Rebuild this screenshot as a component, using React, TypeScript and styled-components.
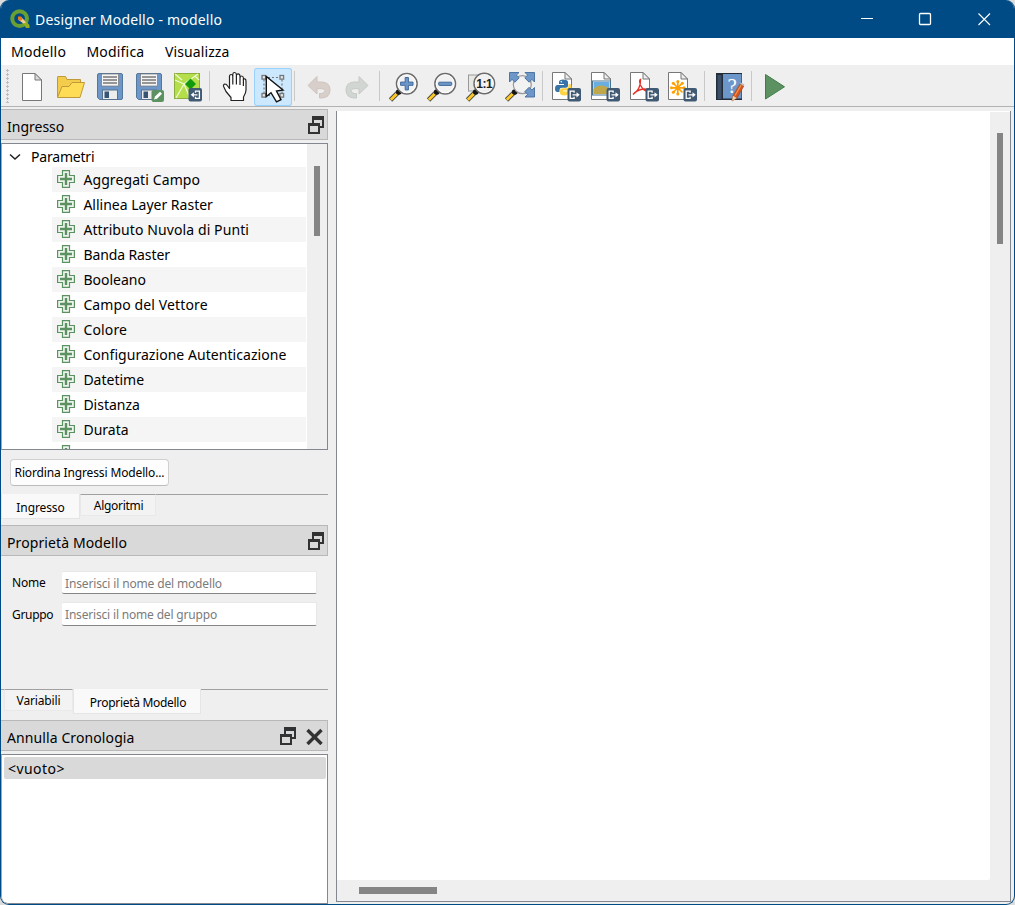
import React from 'react';
import styled, { createGlobalStyle } from 'styled-components';

const Global = createGlobalStyle`
  * { box-sizing: border-box; }
  html, body { margin: 0; padding: 0; background: #dcdcdc; overflow: hidden; }
  svg { display: block; flex: none; }
`;

const Window = styled.div`
  width: 1015px;
  height: 905px;
  display: flex;
  flex-direction: column;
  border: 1px solid #004b85;
  border-top: 0;
  border-radius: 9px;
  background: #efefef;
  overflow: hidden;
  font-family: 'Noto Sans', 'Open Sans', sans-serif;
  font-size: 14px;
  color: #000;
`;

const TitleBar = styled.header`
  height: 38px;
  flex: none;
  display: flex;
  align-items: center;
  padding-left: 9px;
  background: #004b85;
  color: #fff;
`;

const Label = styled.span<{ $size?: number; $track?: number }>`
  font-size: ${p => p.$size ?? 14}px;
  letter-spacing: ${p => p.$track ?? 0}px;
  line-height: 20px;
  white-space: pre;
`;

const TitleText = styled(Label)`
  flex: 1;
  margin-left: 5px;
  padding-top: 2px;
`;

const MenuBar = styled.nav`
  height: 27px;
  flex: none;
  display: flex;
  align-items: center;
  gap: 20px;
  padding-left: 10px;
  background: #fff;
`;

const MenuItem = styled(Label)<{ $w: number }>`
  width: ${p => p.$w}px;
`;

const ToolBar = styled.div`
  height: 42px;
  flex: none;
  display: flex;
  align-items: flex-start;
  padding-top: 3px;
  border-bottom: 1px solid #b2b2b2;
`;

const Grip = styled.div`
  width: 3px;
  height: 34px;
  margin: 1px 3px 0 5px;
  background: radial-gradient(circle at 1.5px 1.5px, #bdbdbd 1px, transparent 1.3px) 0 0 / 3px 4px;
`;

const Tool = styled.div<{ $active?: boolean }>`
  height: 38px;
  border-radius: 3px;
  background: ${p => (p.$active ? '#cce8ff' : 'transparent')};
  box-shadow: ${p => (p.$active ? 'inset 0 0 0 1px #99d1ff' : 'none')};
`;

const Separator = styled.div`
  width: 1px;
  height: 30px;
  margin: 3px 5px 0 2px;
  background: #c9c9c9;
`;

const Body = styled.div`
  flex: 1;
  min-height: 0;
  display: flex;
`;

const Side = styled.aside`
  width: 327px;
  flex: none;
  display: flex;
  flex-direction: column;
  padding-top: 2px;
`;

const DockHeader = styled.div<{ $closable?: boolean }>`
  height: 31px;
  flex: none;
  display: flex;
  align-items: center;
  padding: 5px ${p => (p.$closable ? 4 : 2)}px 0 6px;
  background: #d9d9d9;
  border: 1px solid #b8b8b8;
  border-left: 0;
`;

const DockTitle = styled(Label)`
  flex: 1;
`;

const DockButtons = styled.div`
  display: flex;
  gap: 9px;
  margin-top: -5px;
`;

const Tree = styled.div`
  height: 307px;
  flex: none;
  margin-top: 3px;
  display: flex;
  border: 1px solid #828790;
  border-left-color: #a3a8b0;
  background: #fff;
`;

const TreeRows = styled.div`
  flex: 1;
  overflow: hidden;
`;

const TreeRoot = styled.div`
  height: 23px;
  display: flex;
  align-items: center;
  gap: 10px;
  padding: 3px 0 0 7px;
`;

const TreeItem = styled.div<{ $alt: boolean }>`
  height: 25px;
  margin: 0 1px 0 50px;
  padding: 0 0 1px 5px;
  display: flex;
  align-items: center;
  gap: 8.4px;
  background: ${p => (p.$alt ? '#f5f5f5' : '#fff')};
`;

const TreeText = styled(Label)`
  padding-top: 2px;
`;

const TreeScroll = styled.div`
  width: 20px;
  padding: 22px 7px 0 7px;
  background: #efefef;
`;

const Thumb = styled.div<{ $w: number; $h: number }>`
  width: ${p => p.$w}px;
  height: ${p => p.$h}px;
  background: #858585;
`;

const PushButton = styled.button`
  width: 159px;
  height: 27px;
  flex: none;
  margin: 9px 0 8px 9px;
  padding: 0;
  border: 1px solid #d0d0d0;
  border-bottom-color: #bcbcbc;
  border-radius: 4px;
  background: #fdfdfd;
  font-family: inherit;
  color: #000;
`;

const Tabs = styled.div<{ $h: number }>`
  height: ${p => p.$h}px;
  flex: none;
  display: flex;
  align-items: flex-start;
`;

const Tab = styled.div<{ $active?: boolean; $w: number; $pad?: number }>`
  width: ${p => p.$w}px;
  height: ${p => (p.$active ? 25 : 22)}px;
  display: flex;
  align-items: center;
  justify-content: center;
  padding-top: ${p => (p.$active ? 4 : 1)}px;
  padding-left: ${p => p.$pad ?? 0}px;
  background: ${p => (p.$active ? '#f9f9f9' : '#f3f3f3')};
  border: 1px solid ${p => (p.$active ? '#e5e5e5' : '#e9e9e9')};
  border-top: ${p => (p.$active ? '0' : '1px solid #a0a0a0')};
`;

const TabLine = styled.div<{ $w?: number }>`
  height: 1px;
  flex: ${p => (p.$w ? 'none' : '1')};
  width: ${p => (p.$w ? p.$w + 'px' : 'auto')};
  background: #a0a0a0;
`;

const Form = styled.div`
  height: 133px;
  flex: none;
  display: grid;
  grid-template-columns: 50px 255px;
  grid-template-rows: 23px 24px;
  row-gap: 8px;
  padding: 15px 0 0 11px;
`;

const FieldName = styled(Label)<{ $top?: number }>`
  padding-top: ${p => p.$top ?? 2}px;
`;

const Field = styled.div`
  display: flex;
  align-items: center;
  padding: 2px 0 0 3px;
  background: #fff;
  border: 1px solid #e8e8e8;
  border-left-width: 0;
  border-bottom-color: #868686;
  border-radius: 2px;
  color: #7b7b7b;
`;

const List = styled.div`
  flex: 1;
  margin-top: 3px;
  padding: 2px 1px 0 2px;
  border: 1px solid #828790;
  border-left-color: #a3a8b0;
  border-radius: 0 0 0 7px;
  background: #fff;
`;

const ListItem = styled.div`
  height: 22px;
  display: flex;
  align-items: center;
  padding: 1px 0 0 4px;
  border-radius: 2px;
  background: #d9d9d9;
`;

const Canvas = styled.main`
  width: 675px;
  height: 791px;
  margin: 4px 0 0 8px;
  display: grid;
  grid-template-columns: 653px 20px;
  grid-template-rows: 769px 21px;
  border: 1px solid #828790;
  border-top: 0;
  background: #efefef;
`;

const Sheet = styled.div`
  background: #fff;
  border-radius: 0 0 2px 0;
`;

const VBar = styled.div`
  padding: 21px 0 0 7px;
  border-top: 1px solid #fff;
`;

const HBar = styled.div`
  padding: 7px 0 0 22px;
`;

const ExportBadge = ({ x, y = 88 }: { x: number; y?: number }) => (
  <g transform={`translate(${x} ${y})`}>
    <rect width="13.5" height="13.5" rx="2" fill="#415a73" />
    <path d="M6.6 4.8V3.2H2.7V10.3H6.6V8.7M5 6.8H10.5" fill="none" stroke="#fff" strokeWidth="1.3" />
    <path d="M9 4.2l3.2 2.6L9 9.4z" fill="#fff" />
  </g>
);

const Page = ({ x }: { x: number }) => (
  <g transform={`translate(${x} 72)`}>
    <path d="M.5 .5H13L19.5 7V27.5H.5z" fill="#fff" stroke="#777" />
    <path d="M13 .5V7H19.5z" fill="#eee" stroke="#777" />
  </g>
);

const Floppy = ({ x }: { x: number }) => (
  <g transform={`translate(${x} 73)`}>
    <path d="M2 .5H24Q25.5.5 25.5 2V25Q25.5 26.5 24 26.5H2.5L.5 24.5V2Q.5.5 2 .5z" fill="#6d97c8" stroke="#56779d" />
    <rect x="4.5" y="1" width="17" height="12" fill="#f5f5f5" stroke="#777" strokeWidth=".7" />
    <path d="M6 4h14M6 7h14M6 10h14" stroke="#777" strokeWidth="1.3" />
    <rect x="5.5" y="17" width="15" height="9.5" fill="#ececec" stroke="#58718c" />
    <rect x="7.5" y="18.5" width="4.5" height="6.5" fill="#365574" />
  </g>
);

const Handle = ({ x, hx, y, r }: { x: number; hx: number; y: number; r: number }) => (
  <g>
    <path d={`M${x - r * 0.7} ${y + r * 0.7}L${hx + 9} 92.5`} stroke="#555" strokeWidth="2" />
    <path d={`M${hx + 1} 100L${hx + 9} 92`} stroke="#4b4b3d" strokeWidth="4.6" />
    <path d={`M${hx + 1.3} 99.7L${hx + 7.3} 93.7`} stroke="#ffc928" strokeWidth="2.8" />
    <circle cx={hx + 9.3} cy="92" r="2.8" fill="#151515" />
  </g>
);

const Lens = ({ x, y = 83.7, r = 10.3, hx }: { x: number; y?: number; r?: number; hx: number }) => (
  <g>
    <Handle x={x} hx={hx} y={y} r={r} />
    <circle cx={x} cy={y} r={r} fill="#f2f2f2" fillOpacity=".88" stroke="#6b6b6b" strokeWidth="1.5" />
    <circle cx={x} cy={y} r={r - 1.3} fill="none" stroke="#fff" strokeWidth=".8" />
  </g>
);

const NewIcon = () => (
  <g>
    <path d="M22.5 73.5H35L41.5 80V100.5H22.5z" fill="#fff" stroke="#777" />
    <path d="M35 73.5V80H41.5z" fill="#ddd" stroke="#777" />
  </g>
);

const OpenIcon = () => (
  <g stroke="#c0993a" strokeLinejoin="round">
    <path d="M57.5 97V77Q57.5 76.5 58 76.5H65.5L67 79.5H80.5V83" fill="#f4cc4c" />
    <path d="M57.5 97.5L62 86.5H69L72 82.5H84.5L80 97.5z" fill="#ffdc56" />
  </g>
);

const SaveAsIcon = () => (
  <g>
    <Floppy x={136} />
    <rect x="151.5" y="90" width="12.5" height="12" rx="2" fill="#5c9262" />
    <path d="M154 99.5L155 96.5L160 91.8L162 93.7L157 98.7z" fill="#fff" />
  </g>
);

const ModelImageIcon = () => (
  <g>
    <rect x="174.5" y="73.5" width="25" height="25" fill="#b5df4a" stroke="#8cae3f" />
    <path d="M175 80L184 84L198 74M184 84L176 98M184 84L190 98M175 74L182 80M195 76L199 80" stroke="#eef8d4" fill="none" strokeWidth="1.3" />
    <path d="M190.5 78.5L196 84L190.5 89.5L185 84z" fill="#119a0b" />
    <g transform="translate(188.5 88)">
      <rect width="13.5" height="13.5" rx="2" fill="#415a73" />
      <path d="M7 4.8V3.2H10.9V10.3H7V8.7M9 6.8H4.5" fill="none" stroke="#fff" strokeWidth="1.3" />
      <path d="M5.4 4.2L2.2 6.8l3.2 2.6z" fill="#fff" />
    </g>
  </g>
);

const HandIcon = () => (
  <path
    d="M231 100.5V97.5L226 91.5L223.5 86.2Q223.2 84.3 225 84Q226.5 84 227.6 86L229.5 88.5V76.5Q229.5 74.5 231.2 74.5Q232.6 74.5 232.8 76.5V74.3Q233 72.5 234.5 72.5Q236.2 72.5 236.4 74.5V75.5Q236.7 73.8 238.1 73.8Q239.8 73.8 240 76V78Q240.3 76 241.7 76Q243.2 76 243.4 78V80Q243.8 78.5 244.8 78.8Q246 79 246 81V90Q246 93 243.5 97V100.5zM232.8 76V84.5M236.4 75V84.5M240 77.5V85M243.4 79V86"
    fill="#fff" stroke="#222" strokeWidth="1.2" strokeLinejoin="round"
  />
);

const SelectIcon = () => (
  <g>
    <rect x="264" y="77.5" width="18" height="18" fill="none" stroke="#777" strokeWidth="1.2" strokeDasharray="2 2" />
    {[[262, 75.5], [280, 75.5], [262, 93.5], [280, 93.5]].map(([x, y]) => (
      <rect key={`${x}-${y}`} x={x} y={y} width="3.6" height="3.6" fill="#e8e8e8" stroke="#777" strokeWidth="1.3" />
    ))}
    <path d="M266.3 76.5V96.5L271 92.7L276.5 101.8L281 99.6L276.5 91L283 90z" fill="#fff" stroke="#111" strokeWidth="1.4" />
  </g>
);

const undoPath = 'M308 85.5L317 76.5V82H322Q330 82.5 330 90Q330 97.5 322 98H319.5V93.5H321.5Q325 93.3 325 90.5Q325 88.8 321.5 88.7H317V94z';

const UndoIcon = () => <path d={undoPath} fill="#d8cfca" stroke="#cdc4bf" />;
const RedoIcon = () => <path d={undoPath} transform="translate(676 0) scale(-1 1)" fill="#d2d6d2" stroke="#c4cac4" />;

const ZoomInIcon = () => (
  <g>
    <Lens x={406.8} hx={389.5} />
    <path d="M405.2 77.5H408.4V82.1H413V85.3H408.4V89.9H405.2V85.3H400.6V82.1H405.2z" fill="#6d97c8" stroke="#41689b" />
  </g>
);

const ZoomOutIcon = () => (
  <g>
    <Lens x={445.2} hx={427.5} />
    <rect x="438.7" y="82.2" width="13" height="3.2" rx=".8" fill="#6d97c8" stroke="#41689b" />
  </g>
);

const ActualText = styled.text`
  font: bold 12px 'Liberation Sans', sans-serif;
  letter-spacing: -0.4px;
`;

const ZoomActualIcon = () => (
  <g>
    <rect x="468.5" y="75" width="20" height="16" fill="#e7e7e4" stroke="#999" />
    <Lens x={484.3} y={83.5} hx={466.5} />
    <ActualText x="476.2" y="87.8" fill="#222">1:1</ActualText>
  </g>
);

const ZoomFullIcon = () => (
  <g>
    <Handle x={522.3} y={84.6} r={9} hx={505.5} />
    <circle cx="522.3" cy="84.6" r="9" fill="#f2f2f2" stroke="#999" strokeWidth="1.2" />
    <g fill="#6d97c8" stroke="#456c9c" strokeWidth=".9">
      <path d="M509.5 72.5H519L516.4 75.1L519.2 77.9L514.9 82.2L512.1 79.4L509.5 82z" />
      <path d="M534.5 72.5H525L527.6 75.1L524.8 77.9L529.1 82.2L531.9 79.4L534.5 82z" />
      <path d="M534.5 97H525L527.6 94.4L524.8 91.6L529.1 87.3L531.9 90.1L534.5 87.5z" />
    </g>
  </g>
);

const PythonIcon = () => (
  <g>
    <Page x={552} />
    <path d="M563 79.5Q559 79.5 559 82V84H564V85H557.5Q555 85 555 89Q555 92 557.5 92H559.5V90Q559.5 87.8 562 87.8H566Q568 87.8 568 85.8V82Q568 79.5 563 79.5z" fill="#3874a8" />
    <path d="M564.5 95.5Q568 95.5 568 93V91.5H563.5V90.5H569.5Q571.5 90.5 571.5 87Q571.5 84 569.5 84H568.5V86Q568.5 88.2 566 88.2H562Q560 88.2 560 90.2V93Q560 95.5 564.5 95.5z" fill="#ffd342" />
    <circle cx="561.3" cy="81.7" r=".8" fill="#fff" />
    <ExportBadge x={567.5} />
  </g>
);

const ImageIcon = () => (
  <g>
    <Page x={591} />
    <rect x="593" y="81.5" width="17" height="13" fill="#69aee1" stroke="#fff" />
    <path d="M593.5 89Q597 85 602 85.5Q605 86 609.5 88V94H593.5z" fill="#c0a84a" />
    <rect x="592.5" y="81" width="18" height="14" fill="none" stroke="#49738f" />
    <ExportBadge x={606.5} />
  </g>
);

const PdfIcon = () => (
  <g>
    <Page x={630} />
    <path d="M633 94.5Q641 89 640.5 79.5Q638.5 80.5 641 86Q644 92 649.5 91Q650 88.8 643 89Q637 90 633 94.5z" fill="none" stroke="#e63225" strokeWidth="1.4" />
    <ExportBadge x={645.5} />
  </g>
);

const SvgIcon = () => (
  <g>
    <Page x={668} />
    <path d="M677.8 81V94.5M671 87.8H684.5M673 83L682.5 92.5M682.5 83L673 92.5" stroke="#ffa000" strokeWidth="1.7" />
    {[[677.8, 81.5], [677.8, 94], [671.5, 87.8], [684, 87.8], [673.3, 83.3], [682.3, 83.3], [673.3, 92.3]].map(([x, y]) => (
      <circle key={`${x}-${y}`} cx={x} cy={y} r="1.5" fill="#ffa000" />
    ))}
    <ExportBadge x={683.5} />
  </g>
);

const QuestionMark = styled.text`
  font: 21px 'Liberation Serif', serif;
`;

const HelpIcon = () => (
  <g>
    <rect x="716" y="73" width="26" height="27" fill="#232c39" />
    <rect x="717.5" y="75" width="4" height="24" fill="#3b4f68" />
    <rect x="723" y="74" width="18.5" height="24.5" fill="#6d97c8" />
    <QuestionMark x="727.5" y="93" fill="#fff">?</QuestionMark>
    <path d="M732 101L733 95.5L740 84L743.8 86L737 98z" fill="#d9541e" stroke="#9a4d25" strokeWidth=".7" />
    <path d="M735 95.5L741 85.2" stroke="#f39b52" strokeWidth="1.1" />
    <path d="M732 101L733 95.8L736.7 98z" fill="#e5d5b7" />
    <path d="M740 84L741 82.5L744.5 84.5L743.8 86z" fill="#bbb" />
  </g>
);

const RunIcon = () => <path d="M765.5 74.5L784.5 86.8L765.5 99z" fill="#5c9262" stroke="#3f7e48" strokeLinejoin="round" />;

type ToolSpec = { x: number; w: number; icon: React.ReactNode; active?: boolean };

const toolGroups: ToolSpec[][] = [
  [
    { x: 12, w: 39, icon: <NewIcon /> },
    { x: 51, w: 39, icon: <OpenIcon /> },
    { x: 90, w: 39, icon: <Floppy x={97} /> },
    { x: 129, w: 39, icon: <SaveAsIcon /> },
    { x: 168, w: 39, icon: <ModelImageIcon /> },
  ],
  [
    { x: 215, w: 39, icon: <HandIcon /> },
    { x: 254, w: 38, icon: <SelectIcon />, active: true },
  ],
  [
    { x: 300, w: 38, icon: <UndoIcon /> },
    { x: 338, w: 39, icon: <RedoIcon /> },
  ],
  [
    { x: 385, w: 38, icon: <ZoomInIcon /> },
    { x: 423, w: 39, icon: <ZoomOutIcon /> },
    { x: 462, w: 39, icon: <ZoomActualIcon /> },
    { x: 501, w: 39, icon: <ZoomFullIcon /> },
  ],
  [
    { x: 548, w: 38, icon: <PythonIcon /> },
    { x: 586, w: 39, icon: <ImageIcon /> },
    { x: 625, w: 39, icon: <PdfIcon /> },
    { x: 664, w: 38, icon: <SvgIcon /> },
  ],
  [{ x: 710, w: 39, icon: <HelpIcon /> }],
  [{ x: 757, w: 38, icon: <RunIcon /> }],
];

const FloatIcon = () => (
  <svg width="17" height="18" viewBox="0 0 17 18" fill="none" stroke="#303234" strokeWidth="2">
    <path d="M5 7V2H15V11H12" />
    <path d="M4 2H16" strokeWidth="4" />
    <rect x="1" y="8" width="10" height="9" />
    <path d="M0 8.5H12" strokeWidth="3" />
  </svg>
);

const CloseIcon = () => (
  <svg width="17" height="18" viewBox="0 0 17 18">
    <path d="M1.5 3L15.5 17M15.5 3L1.5 17" stroke="#303234" strokeWidth="3.4" />
  </svg>
);

const PlusIcon = () => (
  <svg width="18" height="18" viewBox="0 0 18 18">
    <path d="M5.5 .6H12.5V5.5H17.4V12.5H12.5V17.4H5.5V12.5H.6V5.5H5.5z" fill="#eef5ee" stroke="#5c9262" strokeWidth="1.2" />
    <path d="M9 3V15M3 9H15" stroke="#5c9262" strokeWidth="2.4" />
  </svg>
);

const WindowButtons = () => (
  <svg width="138" height="38" viewBox="844 0 138 38" fill="none" stroke="#fff" strokeWidth="1.1">
    <path d="M861 18.5H873" />
    <rect x="919.5" y="13.5" width="11" height="11" rx="1" strokeWidth="1.3" />
    <path d="M978.5 13.5L990 25M990 13.5L978.5 25" />
  </svg>
);

const Controls = styled.div`
  margin-right: 32px;
  svg { overflow: visible; }
`;

const Logo = () => (
  <svg width="20" height="20" viewBox="0 0 20 20">
    <circle cx="9.6" cy="9.6" r="7.4" fill="none" stroke="#6a9f35" strokeWidth="4" />
    <path d="M11 10.5H14L19.5 16V19H16z" fill="#93b023" />
    <path d="M8 8L11.5 8.2L16 13.5L13.5 14.5L8.5 11z" fill="#f3c9a0" />
    <path d="M8 7.5H11L12.5 10.5L10 12L8 10z" fill="#ee7913" />
  </svg>
);

const parameters: [string, number][] = [
  ['Aggregati Campo', 0.1],
  ['Allinea Layer Raster', 0],
  ['Attributo Nuvola di Punti', 0.1],
  ['Banda Raster', -0.1],
  ['Booleano', 0],
  ['Campo del Vettore', 0.12],
  ['Colore', 0.15],
  ['Configurazione Autenticazione', 0.05],
  ['Datetime', 0],
  ['Distanza', 0],
  ['Durata', 0.03],
  ['', 0],
];

export default function App() {
  return (
    <>
      <Global />
      <Window>
        <TitleBar>
          <Logo />
          <TitleText $track={0.2}>Designer Modello - modello</TitleText>
          <Controls><WindowButtons /></Controls>
        </TitleBar>
        <MenuBar>
          <MenuItem $w={55.4} $track={0.25}>Modello</MenuItem>
          <MenuItem $w={58.6} $track={0.2}>Modifica</MenuItem>
          <MenuItem $w={65} $track={0.1}>Visualizza</MenuItem>
        </MenuBar>
        <ToolBar>
          <Grip />
          {toolGroups.map((group, i) => (
            <React.Fragment key={i}>
              {i > 0 && <Separator />}
              {group.map(t => (
                <Tool key={t.x} $active={t.active}>
                  <svg width={t.w} height="38" viewBox={`${t.x} 68 ${t.w} 38`}>{t.icon}</svg>
                </Tool>
              ))}
            </React.Fragment>
          ))}
        </ToolBar>
        <Body>
          <Side>
            <DockHeader>
              <DockTitle>Ingresso</DockTitle>
              <DockButtons><FloatIcon /></DockButtons>
            </DockHeader>
            <Tree>
              <TreeRows>
                <TreeRoot>
                  <svg width="12" height="8" viewBox="0 0 12 8" fill="none" stroke="#222" strokeWidth="1.5">
                    <path d="M1 1.5L6 6L11 1.5" />
                  </svg>
                  <Label $track={-0.2}>Parametri</Label>
                </TreeRoot>
                {parameters.map(([name, track], i) => (
                  <TreeItem key={i} $alt={i % 2 === 0}>
                    <PlusIcon />
                    <TreeText $track={track}>{name}</TreeText>
                  </TreeItem>
                ))}
              </TreeRows>
              <TreeScroll><Thumb $w={6} $h={70} /></TreeScroll>
            </Tree>
            <PushButton><Label $size={12} $track={-0.14}>Riordina Ingressi Modello...</Label></PushButton>
            <Tabs $h={31}>
              <Tab $active $w={79}><Label $size={12} $track={-0.1}>Ingresso</Label></Tab>
              <Tab $w={76} $pad={1}><Label $size={12} $track={-0.3}>Algoritmi</Label></Tab>
              <TabLine />
            </Tabs>
            <DockHeader>
              <DockTitle $track={0.1}>Proprietà Modello</DockTitle>
              <DockButtons><FloatIcon /></DockButtons>
            </DockHeader>
            <Form>
              <FieldName $size={12} $track={-0.2}>Nome</FieldName>
              <Field><Label $size={12} $track={-0.15}>Inserisci il nome del modello</Label></Field>
              <FieldName $size={12} $track={-0.3} $top={3}>Gruppo</FieldName>
              <Field><Label $size={12} $track={-0.18}>Inserisci il nome del gruppo</Label></Field>
            </Form>
            <Tabs $h={31}>
              <TabLine $w={3} />
              <Tab $w={69}><Label $size={12} $track={-0.15}>Variabili</Label></Tab>
              <Tab $active $w={128} $pad={2}><Label $size={12} $track={-0.3}>Proprietà Modello</Label></Tab>
              <TabLine />
            </Tabs>
            <DockHeader $closable>
              <DockTitle $track={0.1}>Annulla Cronologia</DockTitle>
              <DockButtons><FloatIcon /><CloseIcon /></DockButtons>
            </DockHeader>
            <List><ListItem><Label $track={0.45}>&lt;vuoto&gt;</Label></ListItem></List>
          </Side>
          <Canvas>
            <Sheet />
            <VBar><Thumb $w={6} $h={111} /></VBar>
            <HBar><Thumb $w={78} $h={7} /></HBar>
          </Canvas>
        </Body>
      </Window>
    </>
  );
}
